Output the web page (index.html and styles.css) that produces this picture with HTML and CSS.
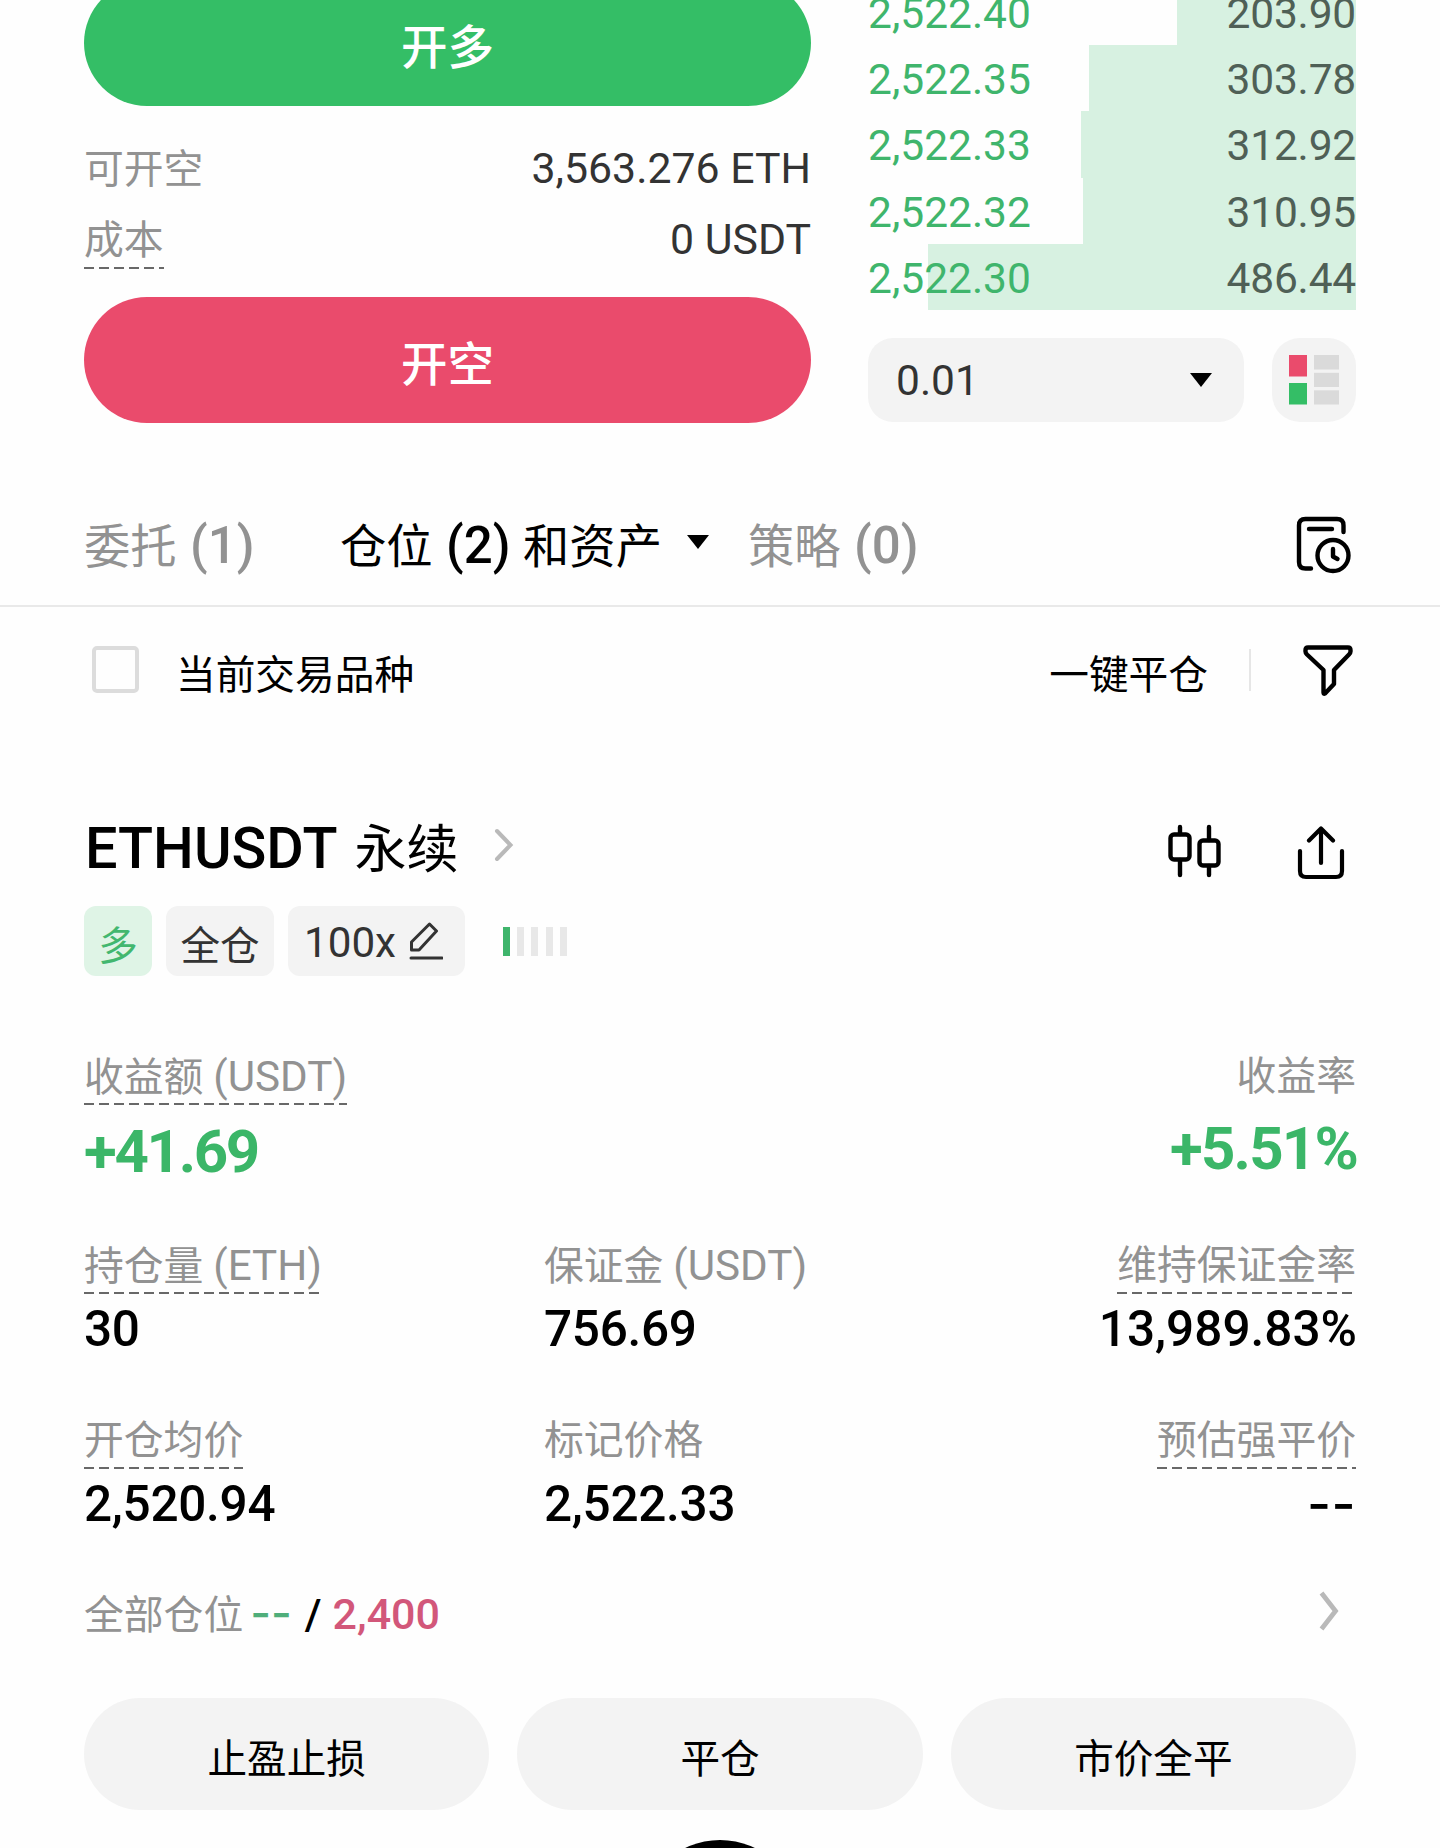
FILE: index.html
```html
<!DOCTYPE html>
<html lang="zh-CN">
<head>
  <meta charset="UTF-8">
  <meta name="viewport" content="width=device-width, initial-scale=1.0">
  <title>ETHUSDT 永续</title>
  <link rel="stylesheet" href="styles.css">
</head>
<body>
  <section class="trade">
    <div class="order-form">
      <button class="big-btn long">开多</button>
      <div class="info">
        <div class="info-row"><span class="label">可开空</span><span class="num">3,563.276 ETH</span></div>
        <div class="info-row"><span class="label hint">成本</span><span class="num">0 USDT</span></div>
      </div>
      <button class="big-btn short">开空</button>
    </div>

    <div class="book">
      <div class="bids">
        <div class="bid"><i class="depth" style="width:179px"></i><span class="price">2,522.40</span><span class="qty">203.90</span></div>
        <div class="bid"><i class="depth" style="width:267px"></i><span class="price">2,522.35</span><span class="qty">303.78</span></div>
        <div class="bid"><i class="depth" style="width:275px"></i><span class="price">2,522.33</span><span class="qty">312.92</span></div>
        <div class="bid"><i class="depth" style="width:273px"></i><span class="price">2,522.32</span><span class="qty">310.95</span></div>
        <div class="bid"><i class="depth" style="width:428px"></i><span class="price">2,522.30</span><span class="qty">486.44</span></div>
      </div>
      <div class="book-tools">
        <div class="step"><span>0.01</span><i class="caret"></i></div>
        <div class="view">
          <svg width="50" height="50" viewBox="0 0 50 50">
            <rect x="0" y="0" width="18" height="21.5" fill="#ea4b6c"/>
            <rect x="0" y="28" width="18" height="21.5" fill="#34be66"/>
            <rect x="25" y="0" width="25" height="14.5" fill="#dadada"/>
            <rect x="25" y="17.8" width="25" height="14.2" fill="#dadada"/>
            <rect x="25" y="35.3" width="25" height="14.2" fill="#dadada"/>
          </svg>
        </div>
      </div>
    </div>
  </section>

  <nav class="tabs">
    <span class="tab orders">委托 <b>(1)</b></span>
    <span class="tab active">仓位 <b>(2)</b> 和资产</span>
    <i class="caret"></i>
    <span class="tab">策略 <b>(0)</b></span>
    <svg class="history" width="56" height="58" viewBox="0 0 56 58" fill="none" stroke="#000" stroke-width="4.400" stroke-linecap="round" stroke-linejoin="round">
      <path d="M47.500 16V9.500Q47.500 3 41 3H9.500Q3 3 3 9.500V46Q3 52.500 9.500 52.500H15"/>
      <path d="M13 13H36"/>
      <circle cx="37" cy="39.500" r="15.500"/>
      <path d="M37 33V40.500L41.500 43"/>
    </svg>
  </nav>

  <div class="filter-bar">
    <i class="checkbox"></i>
    <span class="current">当前交易品种</span>
    <span class="close-all">一键平仓</span>
    <i class="divider"></i>
    <svg class="funnel" width="50" height="52" viewBox="0 0 50 52" fill="none" stroke="#000" stroke-width="4.400" stroke-linejoin="round">
      <path d="M5 2.500H45Q47.500 2.500 47.500 5V6.500Q47.500 8 46 9.500L31 25V39L22 48.500Q20.500 49.500 20.500 47.500V25L4 9.500Q2.500 8 2.500 6.500V5Q2.500 2.500 5 2.500Z"/>
    </svg>
  </div>

  <section class="position">
    <div class="title-row">
      <h2><b>ETHUSDT</b><span>永续</span></h2>
      <svg class="chev" width="20" height="34" viewBox="0 0 20 34" fill="none" stroke="#b9b9b9" stroke-width="4" stroke-linecap="round"><path d="M3 3L16.500 17L3 31"/></svg>
      <svg class="candles" width="54" height="54" viewBox="0 0 54 54" fill="none" stroke="#000" stroke-width="4.400" stroke-linecap="round">
        <rect x="2.500" y="10.500" width="19" height="25" rx="3.500"/>
        <path d="M12 3V10M12 36V51M41 3V16M41 42V51"/>
        <rect x="31.500" y="16.500" width="19" height="25" rx="3.500"/>
      </svg>
      <svg class="share" width="48" height="54" viewBox="0 0 48 54" fill="none" stroke="#000" stroke-width="4.200" stroke-linecap="round" stroke-linejoin="round">
        <path d="M3 25V45Q3 51 9 51H39Q45 51 45 45V25"/>
        <path d="M24 37V3M12 14.500L24 2.500L36 14.500"/>
      </svg>
    </div>

    <div class="tags">
      <span class="tag side">多</span>
      <span class="tag mode">全仓</span>
      <span class="tag lever">100x
        <svg width="34" height="38" viewBox="0 0 34 38" fill="none" stroke="#333" stroke-width="3" stroke-linejoin="round"><path d="M2 36H33" stroke-linecap="round"/><path d="M2.500 28V20L20.500 2L27.500 9L10 28Z"/></svg>
      </span>
      <div class="risk"><i class="on"></i><i></i><i></i><i></i><i></i></div>
    </div>

    <div class="pnl">
      <div class="cell">
        <div class="label hint">收益额 <span class="num">(USDT)</span></div>
        <div class="value">+41.69</div>
      </div>
      <div class="cell end">
        <div class="label">收益率</div>
        <div class="value rate">+5.51%</div>
      </div>
    </div>

    <div class="stats">
      <div class="cell"><div class="label hint">持仓量 <span class="num">(ETH)</span></div><div class="value">30</div></div>
      <div class="cell"><div class="label">保证金 <span class="num">(USDT)</span></div><div class="value">756.69</div></div>
      <div class="cell end"><div class="label hint">维持保证金率</div><div class="value">13,989.83%</div></div>
      <div class="cell"><div class="label hint">开仓均价</div><div class="value">2,520.94</div></div>
      <div class="cell"><div class="label">标记价格</div><div class="value">2,522.33</div></div>
      <div class="cell end"><div class="label hint">预估强平价</div><div class="value dashes">--</div></div>
    </div>

    <div class="total">
      <span class="label">全部仓位</span>
      <span class="dashes up">--</span>
      <span class="slash">/</span>
      <span class="max">2,400</span>
      <svg class="chev" width="20" height="40" viewBox="0 0 20 40" fill="none" stroke="#b9b9b9" stroke-width="4.800"><path d="M2.500 2L16.500 20L2.500 38"/></svg>
    </div>

    <div class="actions">
      <button>止盈止损</button>
      <button>平仓</button>
      <button>市价全平</button>
    </div>
  </section>

  <footer class="bottom-bar"><div class="home"></div></footer>
</body>
</html>
```
FILE: styles.css
```css
* {
  box-sizing: border-box;
}
body {
  margin: 0;
  height: 1848px;
  overflow: hidden;
  background: #fefefe;
  color: #000;
  font-family: Roboto, "Noto Sans CJK SC", sans-serif;
  font-size: 40px;
}
button {
  border: none;
  padding: 0;
  font-family: inherit;
}
svg, i {
  display: block;
  flex: none;
}
b {
  font-weight: 500;
}

/* order form + book */
.trade {
  display: flex;
  justify-content: space-between;
  height: 423px;
  padding: 0 84px;
}
.order-form {
  width: 727px;
  margin-top: -20px;
}
.big-btn {
  display: block;
  width: 100%;
  height: 126px;
  border-radius: 63px;
  color: #fff;
  font-size: 46.5px;
  font-weight: 500;
  padding-top: 1px;
}
.long {
  background: #34be66;
}
.short {
  background: #ea4b6c;
}
.info {
  height: 191px;
  padding-top: 37px;
}
.info-row {
  display: flex;
  justify-content: space-between;
  align-items: baseline;
  height: 71px;
}
.label {
  color: #929292;
  font-size: 39.8px;
  line-height: 52px;
  white-space: nowrap;
}
.num {
  font-size: 42.5px;
}
.info .num {
  color: #333;
  font-size: 42.8px;
}
.hint {
  width: fit-content;
  padding-bottom: 2px;
  background: repeating-linear-gradient(90deg, #686868 0 10px, transparent 10px 15px) left bottom / 100% 2px no-repeat;
}
.book {
  width: 488px;
}
.bids {
  height: 331px;
  margin-top: -21px;
}
.bid {
  position: relative;
  display: flex;
  justify-content: space-between;
  height: 66.2px;
  line-height: 70.5px;
  font-size: 42.5px;
}
.depth {
  position: absolute;
  top: 0;
  right: 0;
  height: 100%;
  background: #d7f1e1;
}
.price, .qty {
  position: relative;
}
.price {
  color: #3fb56c;
}
.qty {
  color: #4f6056;
  letter-spacing: -0.2px;
}
.book-tools {
  display: flex;
  justify-content: space-between;
  margin-top: 28px;
}
.step, .view {
  height: 84px;
  background: #f3f3f3;
  display: flex;
  align-items: center;
}
.step {
  width: 376px;
  border-radius: 25px;
  justify-content: space-between;
  padding: 0 32px 0 28px;
  font-size: 42.5px;
  color: #333;
}
.view {
  width: 84px;
  border-radius: 28px;
  justify-content: center;
}
.caret {
  width: 22px;
  height: 14px;
  background: #000;
  clip-path: polygon(0 0, 100% 0, 50% 100%);
}

/* tabs */
.tabs {
  display: flex;
  align-items: center;
  height: 184px;
  padding: 65px 84px 0;
  border-bottom: 2px solid #e9e9e9;
  font-size: 46.3px;
  line-height: 60px;
  white-space: nowrap;
}
.tabs b {
  font-size: 51px;
  margin: 0 1px 0 2px;
}
.tab {
  color: #929292;
}
.orders {
  width: 256px;
}
.active {
  width: 347px;
  color: #000;
}
.tabs .caret {
  margin: 0 39px 9px 0;
}
.history {
  margin: 0 4px 3px auto;
}

/* filter bar */
.filter-bar {
  display: flex;
  align-items: center;
  height: 127px;
  padding: 0 87px 2px 92px;
  font-size: 39.7px;
}
.checkbox {
  width: 47px;
  height: 47px;
  border: 4px solid #dcdcdc;
  border-radius: 5px;
  margin-right: 37px;
}
.current, .close-all {
  padding-top: 3px;
}
.close-all {
  margin-left: auto;
}
.divider {
  width: 2px;
  height: 42px;
  background: #e6e6e6;
  margin: 0 52px 0 41px;
}
.funnel {
  margin-top: 2px;
}

/* position card */
.position {
  padding: 74px 84px 0;
}
.title-row {
  display: flex;
  align-items: center;
  height: 80px;
}
h2 {
  display: flex;
  align-items: baseline;
  margin: 0;
  padding-top: 3px;
  font-size: 57.5px;
  line-height: 80px;
  font-weight: 400;
}
h2 b {
  margin-left: 1px;
}
h2 span {
  font-size: 52px;
  margin-left: 17px;
}
.title-row .chev {
  margin: 0 0 7px 35px;
}
.candles {
  margin: 5px 75px 0 auto;
}
.share {
  margin: 9px 11px 0 0;
}
.tags {
  display: flex;
  align-items: center;
  margin-top: 18px;
}
.tag {
  display: flex;
  align-items: center;
  justify-content: center;
  height: 70px;
  border-radius: 12px;
  margin-right: 14px;
  padding-top: 2px;
  background: #f3f3f3;
  color: #333;
  font-size: 39.6px;
}
.side {
  width: 68px;
  background: #dff4e6;
  color: #43b76f;
}
.mode {
  width: 108px;
}
.lever {
  width: 177px;
  gap: 13px;
  padding: 2px 6px 0 0;
  font-size: 42.2px;
}
.lever svg {
  margin-bottom: 2px;
}
.risk {
  display: flex;
  gap: 7.2px;
  margin-left: 24px;
}
.risk i {
  width: 7px;
  height: 29px;
  background: #e8e8e8;
}
.risk .on {
  background: #3fb56c;
}
.pnl {
  display: flex;
  justify-content: space-between;
  height: 114px;
  margin-top: 75px;
}
.cell .label {
  height: 54px;
}
.cell .num {
  font-size: 42.2px;
}
.end {
  display: flex;
  flex-direction: column;
  align-items: flex-end;
}
.pnl .value {
  margin-top: 15px;
  color: #3bb668;
  font-size: 60px;
  font-weight: 700;
  letter-spacing: -2.3px;
  line-height: 64px;
}
.pnl .rate {
  margin: 14px -1px 0 0;
  letter-spacing: -1.8px;
}
.stats {
  display: grid;
  grid-template-columns: 460px 400px 1fr;
  grid-auto-rows: 175px;
  margin-top: 75px;
}
.stats .value {
  margin-top: 5px;
  font-size: 49.500px;
  font-weight: 500;
  letter-spacing: -0.3px;
  line-height: 60px;
}
.stats .end .value {
  margin-right: -1px;
  letter-spacing: 0;
}
.dashes {
  font-family: Inter, sans-serif;
}
.stats .end .dashes {
  margin-right: 0;
  font-size: 52px;
  letter-spacing: 0.5px;
}
.total {
  display: flex;
  align-items: baseline;
  height: 50px;
  margin-top: -5px;
  font-size: 43px;
  font-weight: 500;
}
.total .label {
  font-weight: 400;
}
.up {
  color: #4fae7a;
  margin-left: 7px;
  font-size: 45px;
}
.slash {
  margin: 0 11px 0 13px;
}
.max {
  color: #d2577a;
}
.total .chev {
  align-self: flex-start;
  margin: 6px 17px 0 auto;
}
.actions {
  display: grid;
  grid-template-columns: repeat(3, 1fr);
  gap: 28px;
  margin-top: 63px;
}
.actions button {
  height: 112px;
  border-radius: 56px;
  background: #f3f3f3;
  color: #000;
  font-size: 39.6px;
  padding-top: 2px;
}

/* only the top of the round button is on screen */
.bottom-bar {
  height: 8px;
  margin-top: 30px;
  overflow: hidden;
}
.home {
  width: 160px;
  height: 160px;
  margin: 0 auto;
  border-radius: 50%;
  background: #000;
}
```
